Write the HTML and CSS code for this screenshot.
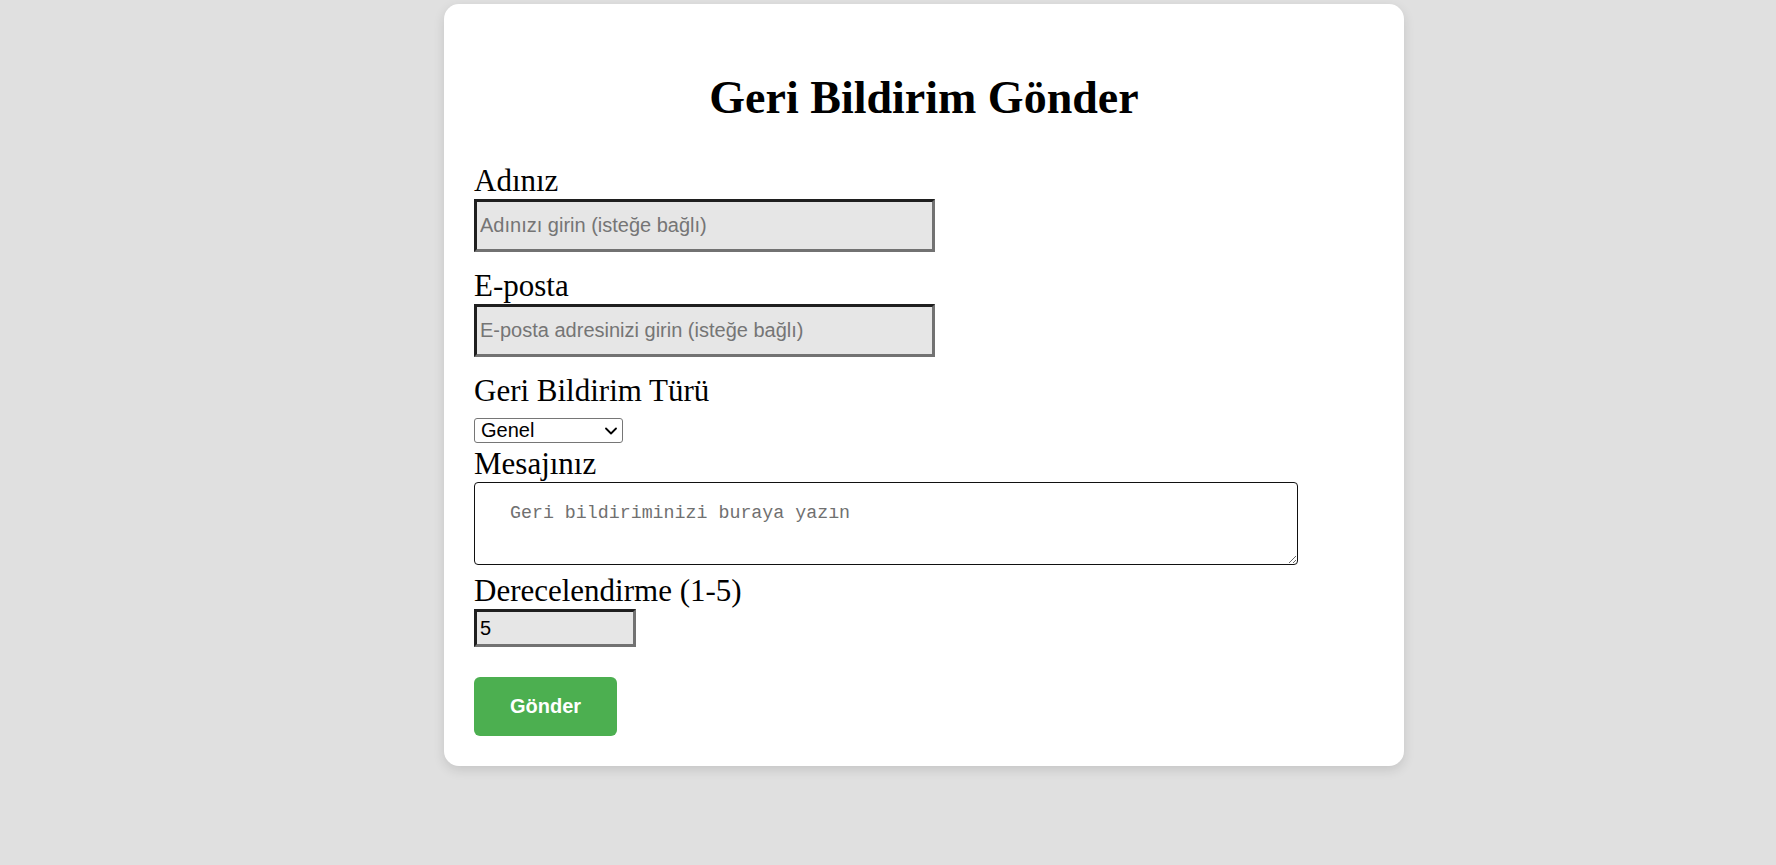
FILE: index.html
```html
<!DOCTYPE html>
<html lang="tr">
<head>
<meta charset="utf-8">
<title>Geri Bildirim Gönder</title>
<link rel="stylesheet" href="styles.css">
</head>
<body>
<div class="page">
  <div class="card">
    <h1 class="title">Geri Bildirim Gönder</h1>
    <form class="form">
      <div class="field">
        <label class="label" for="name">Adınız</label>
        <input class="text-input" id="name" type="text" placeholder="Adınızı girin (isteğe bağlı)">
      </div>
      <div class="field">
        <label class="label" for="email">E-posta</label>
        <input class="text-input" id="email" type="email" placeholder="E-posta adresinizi girin (isteğe bağlı)">
      </div>
      <div class="field field-select">
        <label class="label" for="type">Geri Bildirim Türü</label>
        <div class="select-row">
          <div class="select-wrap">
            <select class="select" id="type">
              <option>Genel</option>
              <option>Öneri</option>
              <option>Hata Bildirimi</option>
            </select>
            <svg class="chevron" width="12" height="8" viewBox="0 0 12 8" aria-hidden="true">
              <path d="M1 1.5 L6 6.5 L11 1.5" fill="none" stroke="#000" stroke-width="1.8" stroke-linecap="round" stroke-linejoin="round"/>
            </svg>
          </div>
        </div>
      </div>
      <div class="field field-message">
        <label class="label" for="msg">Mesajınız</label>
        <textarea class="textarea" id="msg" placeholder="Geri bildiriminizi buraya yazın"></textarea>
      </div>
      <div class="field field-rating">
        <label class="label" for="rating">Derecelendirme (1-5)</label>
        <input class="number-input" id="rating" type="number" min="1" max="5" value="5">
      </div>
      <button class="submit" type="button">Gönder</button>
    </form>
  </div>
</div>
</body>
</html>
```

FILE: styles.css
```css
html, body {
  margin: 0;
  padding: 0;
}

body {
  background: #e0e0e0;
  min-height: 865px;
  font-family: "Liberation Serif", "Times New Roman", serif;
  color: #000;
}

.page {
  display: flex;
  justify-content: center;
  padding: 4px 0 0 72px;
}

.card {
  width: 960px;
  box-sizing: border-box;
  background: #fff;
  border-radius: 15px;
  padding: 30px;
  box-shadow: 0 4px 12px rgba(0, 0, 0, 0.12);
}

.title {
  margin: 37px 0 38px;
  font-family: "Liberation Serif", "Times New Roman", serif;
  font-weight: bold;
  font-size: 46px;
  line-height: 54px;
  text-align: center;
}

.form {
  display: flex;
  flex-direction: column;
  align-items: flex-start;
}

.field {
  display: flex;
  flex-direction: column;
  align-items: flex-start;
  margin-bottom: 16px;
}

.field-select {
  margin-bottom: 0;
}

.field-message {
  margin-bottom: 8px;
}

.field-rating {
  margin-bottom: 30px;
}

.label {
  display: block;
  font-size: 31px;
  line-height: 36px;
}

.text-input,
.number-input {
  box-sizing: border-box;
  height: 53px;
  width: 461px;
  margin: 0;
  padding: 0 3px;
  border-style: solid;
  border-width: 3px;
  border-color: #1f1f1f #727272 #727272 #1f1f1f;
  background: #e6e6e6;
  font-family: "Liberation Sans", Arial, sans-serif;
  font-size: 20px;
  color: #000;
  outline: none;
}

.text-input::placeholder {
  color: #757575;
}

.number-input {
  width: 162px;
  height: 38px;
}

.select-row {
  height: 37px;
  padding-top: 9px;
  box-sizing: border-box;
}

.select-wrap {
  position: relative;
  width: 149px;
  height: 25px;
}

.select {
  appearance: none;
  -webkit-appearance: none;
  display: block;
  box-sizing: border-box;
  width: 149px;
  height: 25px;
  margin: 0;
  font-family: "Liberation Sans", Arial, sans-serif;
  font-size: 20px;
  line-height: 23px;
  color: #000;
  background-color: #fff;
  border: 1px solid #767676;
  border-radius: 3px;
  padding: 0 24px 0 6px;
  outline: none;
}

.chevron {
  position: absolute;
  right: 6px;
  top: 9px;
  pointer-events: none;
}

.textarea {
  display: block;
  box-sizing: border-box;
  width: 824px;
  height: 83px;
  margin: 0;
  padding: 20px 10px 8px 35px;
  border: 1px solid #111;
  border-radius: 4px;
  font-family: "Liberation Mono", "Courier New", monospace;
  font-size: 18.3px;
  color: #000;
  background: #fff;
  outline: none;
}

.textarea::placeholder {
  color: #707070;
}

.submit {
  width: 143px;
  height: 59px;
  padding: 0;
  border: none;
  border-radius: 6px;
  background: #4caf50;
  color: #fff;
  font-family: "Liberation Sans", Arial, sans-serif;
  font-weight: bold;
  font-size: 20px;
  cursor: pointer;
}
```
